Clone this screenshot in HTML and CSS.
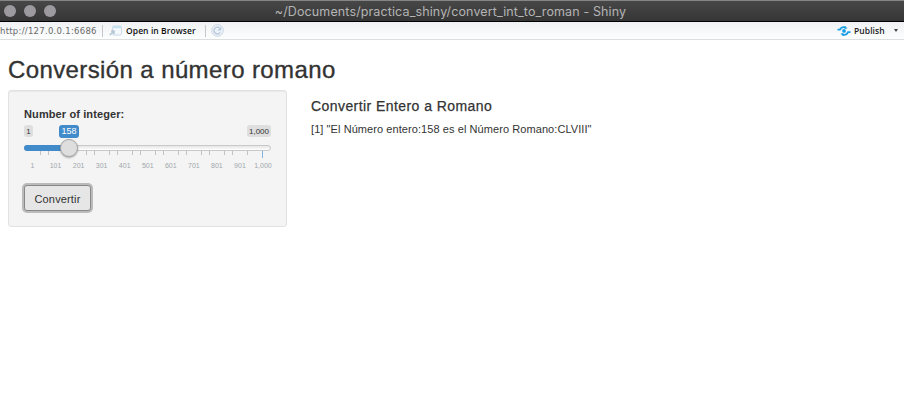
FILE: index.html
```html
<!DOCTYPE html>
<html lang="es">
<head>
<meta charset="utf-8">
<title>~/Documents/practica_shiny/convert_int_to_roman - Shiny</title>
<link rel="stylesheet" href="styles.css">
</head>
<body>
<header class="titlebar">
  <div class="lights"><i></i><i></i><i></i></div>
  <span class="window-title">~/Documents/practica_shiny/convert_int_to_roman - Shiny</span>
</header>
<nav class="toolbar">
  <span class="url">http://127.0.0.1:6686</span>
  <i class="sep sep-first"></i>
  <svg class="icon-open" width="14" height="12" viewBox="0 0 14 12"><rect x="3.5" y="1" width="9" height="9" rx="1.5" fill="#f4f9fd" stroke="#ccd9e5"/><path d="M4 2.2h8" stroke="#c3dff3" stroke-width="2"/><path d="M.8 9.8L4.5 6.6M2 6H5V9" fill="none" stroke="#b5c8d6" stroke-width="1.6"/></svg>
  <span class="open">Open in Browser</span>
  <i class="sep sep-second"></i>
  <svg class="icon-reload" width="13" height="13" viewBox="0 0 13 13"><circle cx="6.5" cy="6.5" r="5.8" fill="#edf2f8" stroke="#c9d5e2"/><path d="M9.2 8.5A3.4 3.4 0 1 1 8.7 4.1" fill="none" stroke="#b3c5db" stroke-width="1.3"/><path d="M10.2 2.8V6.6H6.4z" fill="#b3c5db"/></svg>
  <svg class="icon-publish" width="14" height="12" viewBox="0 0 14 12"><g fill="none" stroke="#1b9fe4" stroke-width="1.7"><path d="M.5 4.6H3C4 2.4 6.3 1.6 8.8 2.4"/><path d="M13.5 7.2H11C10 9.6 7.6 10.4 5.2 9.6"/></g><circle cx="7" cy="5.9" r="1.9" fill="#1b9fe4"/><path d="M7.5 .9l3.2 2.4-3.2.6zM6.5 11.1L3.3 8.7l3.2-.6z" fill="#1b9fe4"/></svg>
  <span class="publish">Publish</span>
  <i class="caret"></i>
</nav>
<main>
  <h1><span>Conversión a número romano</span></h1>
  <div class="row">
    <section class="well">
      <label>Number of integer:</label>
      <div class="values"><span class="limit">1</span><span class="current">158</span><span class="limit max">1,000</span></div>
      <div class="track"><div class="fill"></div><div class="thumb"></div></div>
      <svg class="ticks" width="247" height="8" viewBox="0 0 247 8"><path d="M16.5 0v4M24.5 0v4M39.5 0v4M47.5 0v4M62.5 0v4M70.5 0v4M85.5 0v4M93.5 0v4M108.5 0v4M116.5 0v4M131.5 0v4M139.5 0v4M154.5 0v4M162.5 0v4M177.5 0v4M185.5 0v4M200.5 0v4M208.5 0v4M223.5 0v4" stroke="#bfc3c7"/><path d="M238.5 0v7" stroke="#83b3df"/></svg>
      <div class="scale"><span>1</span><span>101</span><span>201</span><span>301</span><span>401</span><span>501</span><span>601</span><span>701</span><span>801</span><span>901</span><span>1,000</span></div>
      <button>Convertir</button>
    </section>
    <section class="result">
      <h2>Convertir Entero a Romano</h2>
      <p>[1] "El Número entero:158 es el Número Romano:CLVIII"</p>
    </section>
  </div>
</main>
</body>
</html>
```
FILE: styles.css
```css
* { box-sizing: border-box; }
body {
  margin: 0;
  height: 400px;
  overflow: hidden;
  background: #fff;
  color: #333;
  font-family: "Liberation Sans", Arial, sans-serif;
}
.titlebar {
  position: relative;
  display: flex;
  align-items: center;
  justify-content: center;
  height: 22px;
  padding-top: 2px;
  background: linear-gradient(#474747, #363636);
  border-top: 1px solid #858585;
  border-bottom: 1px solid #000;
}
.lights { position: absolute; left: 4px; top: 4px; display: flex; gap: 8px; }
.lights i { width: 12px; height: 12px; border-radius: 50%; background: #9c9a9f; }
.window-title {
  color: #b4b4b4;
  font: 12.5px/18px Inter, sans-serif;
  letter-spacing: 0.12px;
  white-space: nowrap;
  margin-right: 3px;
}
.toolbar {
  display: flex;
  align-items: center;
  height: 18px;
  background: linear-gradient(#eff1f4, #fdfefe);
  border-bottom: 1px solid #dcdedf;
  font: 8.5px/17px "Open Sans", sans-serif;
  white-space: nowrap;
}
.url { width: 102px; padding-top: 1px; color: #6a6a6a; font-family: "DejaVu Sans", sans-serif; letter-spacing: 0.27px; }
.sep { width: 1px; height: 12px; background: #c5c7ca; }
.icon-open { margin-left: 6px; }
.open { width: 79px; margin-left: 3px; color: #111; font-weight: 600; letter-spacing: 0.08px; }
.icon-reload { margin-left: 5px; }
.icon-publish { margin-left: auto; }
.publish { width: 31px; margin-left: 3px; color: #222; font-weight: 600; letter-spacing: 0.08px; }
.caret {
  margin: 0 6px 0 9px;
  border: 2px solid transparent;
  border-top: 3px solid #444;
  border-bottom: 0;
}
main { padding: 14px 8px 0; }
h1 {
  margin: 0;
  height: 36px;
  font-size: 24px;
  line-height: 32px;
  font-weight: 400;
  letter-spacing: 0.39px;
  white-space: nowrap;
  -webkit-text-stroke: 0.35px #333;
}
.row { display: flex; gap: 24px; align-items: flex-start; }
.well {
  display: flex;
  flex-direction: column;
  align-items: flex-start;
  width: 279px;
  height: 137px;
  padding: 16px 15px 13px;
  background: #f4f4f4;
  border: 1px solid #e2e2e2;
  border-radius: 3px;
  box-shadow: inset 0 1px 1px rgba(0, 0, 0, 0.05);
}
.well > * { flex-shrink: 0; }
label { height: 18px; font-size: 11px; line-height: 15px; font-weight: 700; letter-spacing: 0.11px; white-space: nowrap; }
.values { display: flex; width: 247px; height: 13px; font-size: 8px; line-height: 13px; }
.limit { width: 9px; height: 12px; text-align: center; background: #dedede; color: #333; border-radius: 3px; }
.max { width: 24px; margin-left: auto; }
.current { width: 20px; height: 13px; margin-left: 26px; line-height: 13px; text-align: center; color: #fff; background: #428bca; border-radius: 3px; font-size: 9px; }
.track {
  position: relative;
  width: 247px;
  height: 6px;
  margin-top: 7px;
  border: 1px solid #c9c9c9;
  border-radius: 4px;
  background: linear-gradient(#e6e6e6, #fff);
}
.fill { position: absolute; left: -1px; top: -1px; width: 46px; height: 6px; border-radius: 4px 0 0 4px; background: #428bca; }
.thumb {
  position: absolute;
  left: 35px;
  top: -7px;
  width: 18px;
  height: 18px;
  border: 1px solid #a6a6a6;
  border-radius: 50%;
  background: #dedede;
  box-shadow: 0 1px 2px rgba(0, 0, 0, 0.3);
}
.ticks { display: block; height: 8px; }
.scale {
  display: grid;
  grid-template-columns: repeat(11, 23.05px);
  width: 254px;
  margin: 1px 0 0 -3px;
  height: 12px;
  color: #a0a7ac;
  font-size: 7px;
  line-height: 12px;
  text-align: center;
}
.scale span:last-child { margin: 0 -3px; }
button {
  width: 67px;
  height: 26px;
  margin: 13px 0 0;
  padding: 2px 0 0;
  font: 11px/20px "Liberation Sans", Arial, sans-serif;
  letter-spacing: 0.15px;
  color: #333;
  background: #e6e6e6;
  border: 1px solid #888;
  border-radius: 3px;
  box-shadow: 0 0 0 2px #bbb;
}
.result { padding-top: 6px; white-space: nowrap; }
h2 { margin: 0; font-size: 14px; line-height: 20px; font-weight: 400; letter-spacing: 0.43px; -webkit-text-stroke: 0.25px #333; }
p { margin: 5px 0 0; font-size: 11px; line-height: 16px; letter-spacing: 0.075px; }
```
